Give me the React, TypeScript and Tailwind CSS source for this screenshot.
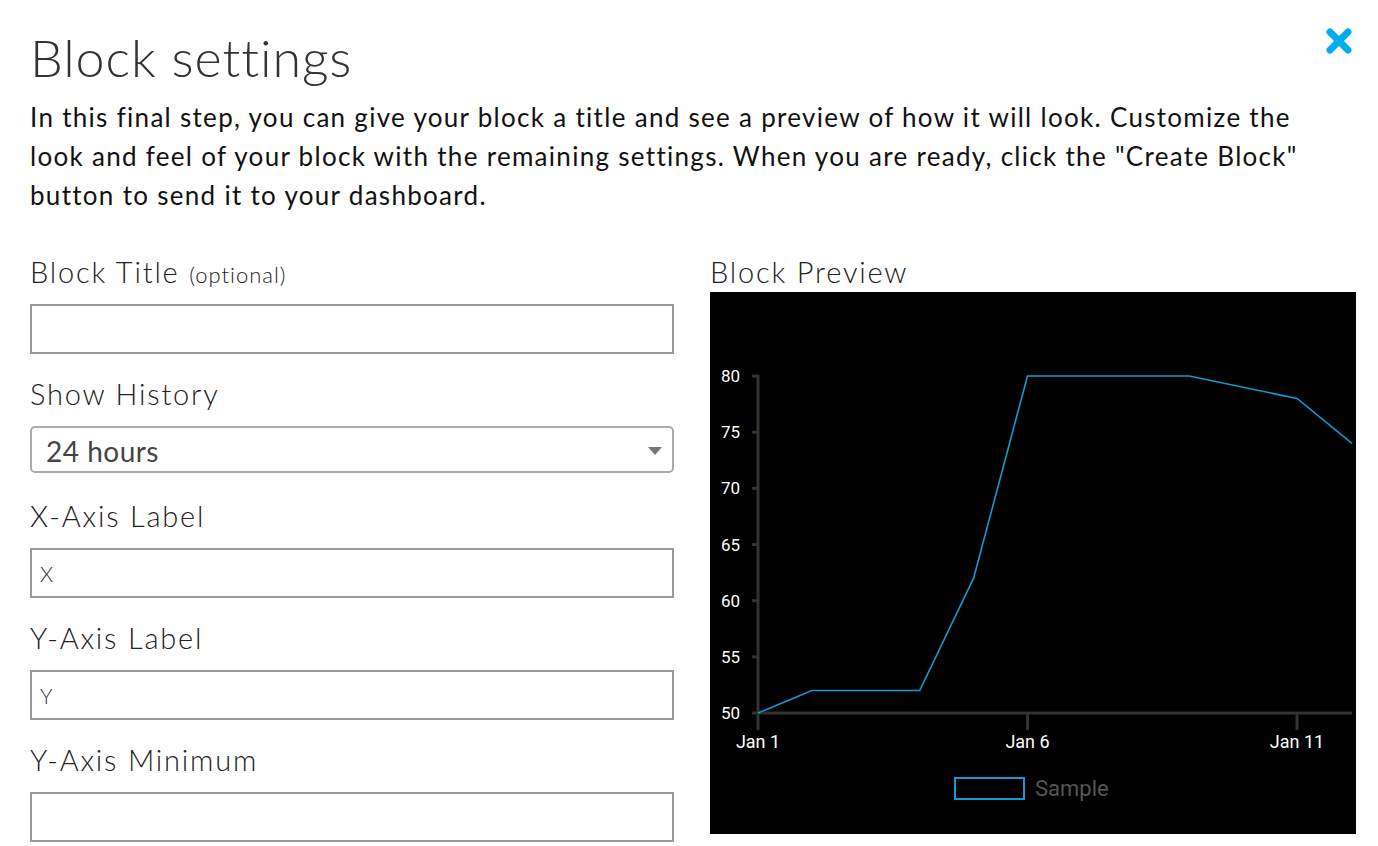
import { useState } from "react";

const days = [
  { d: 1, v: 50 },
  { d: 2, v: 52 },
  { d: 4, v: 52 },
  { d: 5, v: 62 },
  { d: 6, v: 80 },
  { d: 9, v: 80 },
  { d: 11, v: 78 },
  { d: 12.02, v: 74 },
];

const xOf = (d: number) => 48 + (d - 1) * 53.9;
const yOf = (v: number) => 421 - (v - 50) * 11.233;

function Preview() {
  const points = days.map((p) => `${xOf(p.d)},${yOf(p.v)}`).join(" ");
  const yTicks = [50, 55, 60, 65, 70, 75, 80];
  const xTicks = [
    { d: 1, label: "Jan 1" },
    { d: 6, label: "Jan 6" },
    { d: 11, label: "Jan 11" },
  ];

  return (
    <div className="h-[542px] w-[646px] bg-black">
      <svg width="646" height="542" viewBox="0 0 646 542" style={{ fontFamily: "Roboto, 'Liberation Sans', sans-serif" }}>
        {yTicks.map((v) => (
          <g key={v}>
            <line x1="42" x2="48" y1={yOf(v)} y2={yOf(v)} stroke="#333" strokeWidth="3" />
            <text x="30" y={yOf(v) + 6} textAnchor="end" fill="#fff" fontSize="17">
              {v}
            </text>
          </g>
        ))}
        <line x1="48" x2="48" y1="83" y2="421" stroke="#333" strokeWidth="3" />
        <line x1="46.5" x2="642" y1="421" y2="421" stroke="#333" strokeWidth="3" />
        {xTicks.map((t) => (
          <g key={t.label}>
            <line x1={xOf(t.d)} x2={xOf(t.d)} y1="421" y2="438" stroke="#333" strokeWidth="3" />
            <text x={xOf(t.d)} y="456" textAnchor="middle" fill="#fff" fontSize="18">
              {t.label}
            </text>
          </g>
        ))}
        <polyline points={points} fill="none" stroke="#139ad6" strokeWidth="1.6" />
        <rect x="245" y="486" width="69" height="21" fill="none" stroke="#139ad6" strokeWidth="2" />
        <text x="325" y="504" fill="#555" fontSize="22">
          Sample
        </text>
      </svg>
    </div>
  );
}

function Field({ label, children }: { label: React.ReactNode; children: React.ReactNode }) {
  return (
    <div>
      <div className="mb-[14px] h-9 text-[29px] leading-9 font-light tracking-[1.8px] text-[#222]">{label}</div>
      {children}
    </div>
  );
}

function TextBox({ value }: { value: string }) {
  return (
    <input
      readOnly
      value={value}
      className="block h-[50px] w-full border-2 border-[#999] bg-white px-[8px] text-[21px] font-light tracking-[1px] text-[#333] outline-none"
    />
  );
}

export default function App() {
  const [history] = useState("24 hours");

  return (
    <div className="min-h-[846px] bg-white pl-[30px] pr-[22px] font-['Lato',sans-serif]">
      <div className="flex items-start justify-between pt-[27px]">
        <h1 className="h-[60px] text-[52px] leading-[60px] font-light tracking-[0.9px] text-[#333]">Block settings</h1>
        <button className="mr-[3px] h-7 w-7 text-[#00aeef]">
          <svg viewBox="0 0 28 28" width="28" height="28">
            <path d="M5 5 L23 23 M23 5 L5 23" stroke="currentColor" strokeWidth="7" strokeLinecap="round" />
          </svg>
        </button>
      </div>
      <p className="mt-[11px] w-[1290px] text-[26px] leading-[39px] tracking-[1.3px] text-[#111]">
        In this final step, you can give your block a title and see a preview of how it will look. Customize the look and feel of your block with the remaining settings. When you are ready, click the "Create Block" button to send it to your dashboard.
      </p>

      <div className="mt-[39px] grid grid-cols-[644px_646px] gap-x-[36px]">
        <div className="flex flex-col gap-[22px]">
          <Field
            label={
              <>
                Block Title <span className="text-[22px] tracking-[1px]">(optional)</span>
              </>
            }
          >
            <TextBox value="" />
          </Field>
          <Field label="Show History">
            <div className="relative mb-[3px] flex h-[47px] items-center rounded-[5px] border-2 border-[#aaa] px-[14px] pt-[3px] text-[28px] tracking-[0.5px] text-[#444]">
              {history}
              <span className="absolute right-[10px] top-[19px] h-0 w-0 border-x-[7px] border-t-[8px] border-x-transparent border-t-[#777]" />
            </div>
          </Field>
          <Field label="X-Axis Label">
            <TextBox value="X" />
          </Field>
          <Field label="Y-Axis Label">
            <TextBox value="Y" />
          </Field>
          <Field label="Y-Axis Minimum">
            <TextBox value="" />
          </Field>
        </div>

        <div>
          <div className="mb-[2px] h-9 text-[29px] leading-9 font-light tracking-[1.8px] text-[#222]">Block Preview</div>
          <Preview />
        </div>
      </div>
    </div>
  );
}
